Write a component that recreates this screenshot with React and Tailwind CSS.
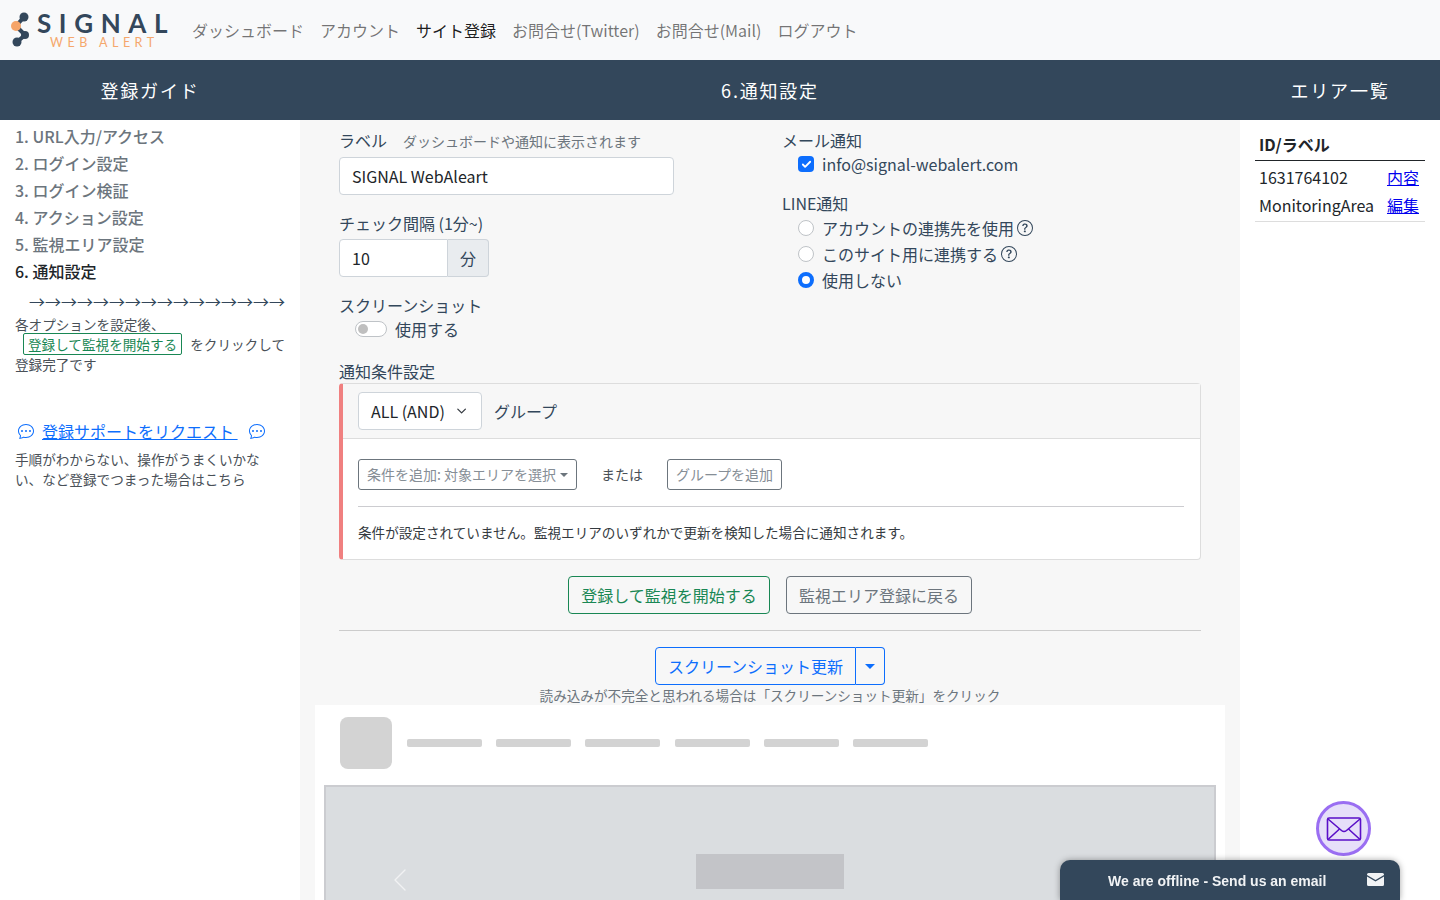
import React from "react";
import { Check, ChevronDown, ChevronLeft } from "lucide-react";
import { BsChatDots, BsQuestionCircle } from "react-icons/bs";

const navItems = ["ダッシュボード", "アカウント", "サイト登録", "お問合せ(Twitter)", "お問合せ(Mail)", "ログアウト"];
const steps = ["1. URL入力/アクセス", "2. ログイン設定", "3. ログイン検証", "4. アクション設定", "5. 監視エリア設定", "6. 通知設定"];

const Logo = () => (
	<div className="flex items-center w-[184px] shrink-0">
		<svg width="26" height="36" viewBox="0 0 26 36" className="ml-[11px] shrink-0">
			<path d="M13 5 L5 14 L14 23 L6 30" fill="none" stroke="#33475b" strokeWidth="4" strokeLinecap="round" strokeLinejoin="round" />
			<circle cx="13" cy="5" r="4.5" fill="#33475b" />
			<circle cx="14" cy="23" r="4" fill="#33475b" />
			<circle cx="6" cy="30" r="4.5" fill="#33475b" />
			<circle cx="5" cy="14" r="5" fill="#f5a468" />
		</svg>
		<div className="flex flex-col font-['Lato',sans-serif]">
			<span className="text-[26px] leading-[22px] tracking-[7.6px] font-bold text-[#33475b] whitespace-nowrap">SIGNAL</span>
			<span className="ml-[13px] mt-[2px] text-[12.5px] leading-[13px] tracking-[4.5px] text-[#f5a76c] whitespace-nowrap">WEB ALERT</span>
		</div>
	</div>
);

const Radio = ({ on }) =>
	on ? (
		<span className="w-4 h-4 rounded-full border-[4px] border-[#0d6efd] bg-white shrink-0" />
	) : (
		<span className="w-4 h-4 rounded-full border border-[#bfc3c7] bg-white shrink-0" />
	);

export default function App() {
	return (
		<div className="h-screen overflow-hidden bg-white text-[#212529] text-base font-['Noto_Sans_CJK_JP',sans-serif]">
			{/* Navbar */}
			<div className="h-[60px] bg-[#f8f9fa] flex items-center">
				<Logo />
				<div className="flex mb-[1px]">
					{navItems.map((item) => (
						<span key={item} className={`px-2 ${item === "サイト登録" ? "text-black/90" : "text-black/55"}`}>
							{item}
						</span>
					))}
				</div>
			</div>

			{/* Title bar */}
			<div className="h-[60px] bg-[#33475b] flex items-center text-white text-[18px] tracking-[1.8px]">
				<div className="w-[300px] text-center">登録ガイド</div>
				<div className="w-[940px] text-center">6.通知設定</div>
				<div className="w-[200px] text-center">エリア一覧</div>
			</div>

			<div className="flex h-[780px]">
				{/* Guide */}
				<div className="w-[300px] px-[15px] pt-[3px] shrink-0">
					{steps.map((s, i) => (
						<div key={s} className={`leading-[27px] font-medium ${i === 5 ? "text-[#212529]" : "text-[#6c757d]"}`}>
							{s}
						</div>
					))}
					<div className="mt-[3px] text-[#33475b] text-right leading-[26px] whitespace-nowrap">→→→→→→→→→→→→→→→→</div>
					<div className="text-[13.6px] leading-[20px] text-[#495057]">
						<div>各オプションを設定後、</div>
						<div className="flex items-center justify-between ml-2 h-[20px]">
							<span className="border border-[#198754] text-[#198754] rounded-[2px] px-1 leading-[20px]">登録して監視を開始する</span>
							<span>をクリックして</span>
						</div>
						<div>登録完了です</div>
					</div>
					<div className="mt-[45px] flex items-center text-[#0d6efd] pl-[3px]">
						<BsChatDots size={16} />
						<span className="ml-2 underline whitespace-pre">登録サポートをリクエスト </span>
						<BsChatDots size={16} className="ml-[11px]" />
					</div>
					<p className="mt-[6px] text-[13.6px] leading-[20px] text-[#495057]">
						手順がわからない、操作がうまくいかない、など登録でつまった場合はこちら
					</p>
				</div>

				{/* Main */}
				<div className="w-[940px] bg-[#f7f7f7] px-[15px] flex flex-col shrink-0">
					<div className="px-[24px] text-[#33475b]">
						<div className="flex">
							<div className="w-[443px]">
								<div className="pt-[8px] leading-[24px]">
									ラベル<span className="ml-4 text-[14px] text-[#6c757d]">ダッシュボードや通知に表示されます</span>
								</div>
								<div className="mt-[4px] w-[335px] h-[38px] bg-white border border-[#ced4da] rounded flex items-center px-3 text-[#212529]">
									SIGNAL WebAleart
								</div>
								<div className="mt-[16px] leading-[24px]">チェック間隔 (1分~)</div>
								<div className="mt-[4px] w-[150px] h-[38px] flex">
									<div className="flex-1 bg-white border border-[#ced4da] rounded-l flex items-center px-3 text-[#212529]">10</div>
									<div className="w-[41px] bg-[#e9ecef] border border-l-0 border-[#ced4da] rounded-r flex items-center justify-center">分</div>
								</div>
								<div className="mt-[16px] leading-[24px]">スクリーンショット</div>
								<div className="pl-[16px] flex items-center leading-[24px]">
									<span className="w-8 h-4 rounded-full border border-[#bfc3c7] bg-white flex items-center px-[2px]">
										<span className="w-[10px] h-[10px] rounded-full bg-[#bfbfbf]" />
									</span>
									<span className="ml-2">使用する</span>
								</div>
							</div>
							<div className="flex-1">
								<div className="pt-[8px] leading-[24px]">メール通知</div>
								<div className="pl-[16px] flex items-center leading-[24px]">
									<span className="w-4 h-4 rounded-[4px] bg-[#0d6efd] flex items-center justify-center shrink-0">
										<Check size={11} strokeWidth={4} className="text-white" />
									</span>
									<span className="ml-2">info@signal-webalert.com</span>
								</div>
								<div className="mt-[15px] leading-[24px]">LINE通知</div>
								<div className="pl-[16px] flex flex-col">
									<div className="flex items-center h-[26px]">
										<Radio />
										<span className="ml-2">アカウントの連携先を使用</span>
										<BsQuestionCircle size={16} className="ml-[3px]" />
									</div>
									<div className="flex items-center h-[26px]">
										<Radio />
										<span className="ml-2">このサイト用に連携する</span>
										<BsQuestionCircle size={16} className="ml-[3px]" />
									</div>
									<div className="flex items-center h-[26px]">
										<Radio on />
										<span className="ml-2">使用しない</span>
									</div>
								</div>
							</div>
						</div>

						<div className="mt-[18px] leading-[24px]">通知条件設定</div>
						<div className="border border-[#dddddd] border-l-[4px] border-l-[#f08080] rounded bg-white h-[177px]">
							<div className="h-[55px] bg-[#f7f7f7] border-b border-[#dddddd] flex items-center px-[15px]">
								<div className="w-[124px] h-[38px] bg-white border border-[#ced4da] rounded flex items-center px-3 text-[#212529] whitespace-nowrap">
									ALL (AND)
									<ChevronDown size={16} strokeWidth={2} className="ml-[9px] text-[#343a40]" />
								</div>
								<span className="ml-3">グループ</span>
							</div>
							<div className="pl-[15px] pr-[16px] pt-[20px]">
								<div className="flex items-center text-[14px]">
									<div className="h-[31px] w-[219px] border border-[#6c757d] rounded-[3px] flex items-center justify-center text-[#868e96]">
										条件を追加: 対象エリアを選択
										<span className="ml-1 border-x-[4px] border-x-transparent border-t-[4px] border-t-[#6c757d]" />
									</div>
									<span className="ml-6 text-[#495057]">または</span>
									<div className="ml-6 h-[31px] w-[115px] border border-[#6c757d] rounded-[3px] flex items-center justify-center text-[#868e96]">グループを追加</div>
								</div>
								<hr className="mt-4 border-[#ccccd0]" />
								<div className="mt-[15px] text-[13.6px] leading-[20px] text-[#343a40]">
									条件が設定されていません。監視エリアのいずれかで更新を検知した場合に通知されます。
								</div>
							</div>
						</div>

						<div className="flex justify-center gap-4 mt-4">
							<div className="h-[38px] w-[202px] border border-[#198754] text-[#198754] rounded flex items-center justify-center">登録して監視を開始する</div>
							<div className="h-[38px] w-[186px] border border-[#6c757d] text-[#6c757d] rounded flex items-center justify-center">監視エリア登録に戻る</div>
						</div>
						<hr className="mt-4 border-[#cccccc]" />
						<div className="flex justify-center mt-4">
							<div className="h-[38px] w-[201px] border border-[#0d6efd] text-[#0d6efd] rounded-l flex items-center justify-center">スクリーンショット更新</div>
							<div className="h-[38px] w-[29px] border border-l-0 border-[#0d6efd] rounded-r flex items-center justify-center">
								<span className="border-x-[5px] border-x-transparent border-t-[5px] border-t-[#0d6efd]" />
							</div>
						</div>
						<div className="text-center text-[13.6px] leading-[20px] text-[#6c757d]">
							読み込みが不完全と思われる場合は「スクリーンショット更新」をクリック
						</div>
					</div>

					{/* Screenshot placeholder */}
					<div className="bg-white flex-1 px-[9px] flex flex-col min-h-0">
						<div className="h-[80px] flex items-center pl-[16px] shrink-0 pb-[4px]">
							<div className="w-[52px] h-[52px] rounded-[8px] bg-[#d3d3d3]" />
							<div className="flex gap-[14.2px] ml-[15px]">
								{[0, 1, 2, 3, 4, 5].map((i) => (
									<div key={i} className="w-[75px] h-2 rounded-[2px] bg-[#d3d3d3]" />
								))}
							</div>
						</div>
						<div className="flex-1 bg-[#dadde0] border-2 border-[#cbccd0] border-b-0 relative flex justify-center">
							<div className="w-[148px] h-[35px] mt-[67px] bg-[#c3c4c8]" />
							<ChevronLeft size={40} strokeWidth={0.8} className="absolute left-[54px] top-[73px] text-[#f1f2f3]" />
						</div>
					</div>
				</div>

				{/* Area list */}
				<div className="w-[200px] px-[15px] pt-[12px] shrink-0">
					<div className="px-1 font-bold h-[29px] leading-[25px] border-b border-[#212529] text-[#212529]">ID/ラベル</div>
					<div className="px-1 border-b border-[#dddddd] pt-[2px] pb-[2px] text-[#212529]">
						<div className="flex justify-between h-[28px] items-center">
							<span>1631764102</span>
							<a className="underline text-[#0000ee] mr-[2px]">内容</a>
						</div>
						<div className="flex justify-between h-[28px] items-center">
							<span>MonitoringArea</span>
							<a className="underline text-[#0000ee] mr-[2px]">編集</a>
						</div>
					</div>
				</div>
			</div>

			{/* Floating widgets */}
			<div className="fixed left-[1316px] top-[801px] w-[55px] h-[55px] rounded-full bg-[#e6dff9] border-[3px] border-[#9a6ef2] flex items-center justify-center">
				<svg width="36" height="26" viewBox="0 0 36 26" fill="none" stroke="#5a0fc8" strokeWidth="1.6" strokeLinejoin="round">
					<rect x="1.5" y="2" width="33" height="22" rx="1.5" />
					<path d="M2 3 L15.5 14.5 Q18 16.5 20.5 14.5 L34 3" />
					<path d="M2 23.5 L13.5 13 M34 23.5 L22.5 13" />
				</svg>
			</div>
			<div className="fixed left-[1060px] top-[860px] w-[340px] h-[40px] bg-[#33475b] rounded-t-[10px] shadow-[0_0_6px_rgba(0,0,0,0.35)] flex items-center font-['Liberation_Sans',sans-serif] font-bold text-[14px] text-[#f1f3f5]">
				<span className="ml-[48px] mt-[2px]">We are offline - Send us an email</span>
				<svg width="17" height="13" viewBox="0 0 17 13" className="ml-[41px] mt-[-2px]" fill="#f1f3f5">
					<path d="M1.5 0 H15.5 Q17 0 17 1.5 V2 L8.5 7 L0 2 V1.5 Q0 0 1.5 0 Z" />
					<path d="M0 3.6 L8.5 8.6 L17 3.6 V11.5 Q17 13 15.5 13 H1.5 Q0 13 0 11.5 Z" />
				</svg>
			</div>
		</div>
	);
}
